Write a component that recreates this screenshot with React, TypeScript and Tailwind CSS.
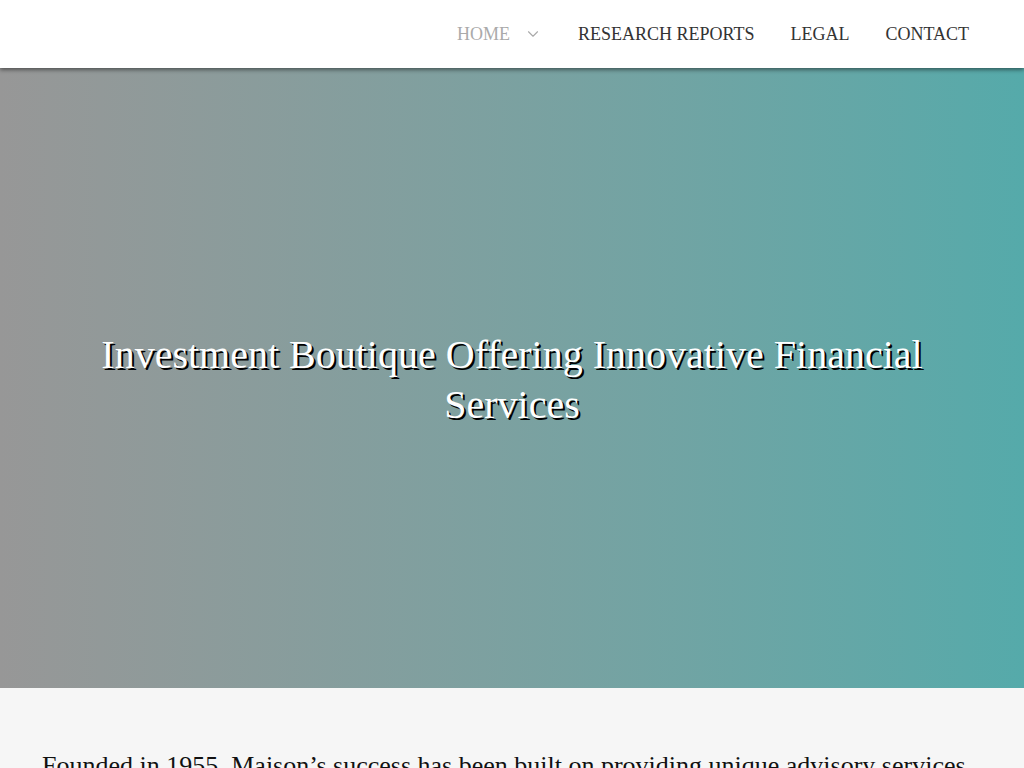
import { ChevronDown } from "lucide-react"

const navItems = ["RESEARCH REPORTS", "LEGAL", "CONTACT"]

export default function App() {
    return (
        <div className="min-h-screen bg-[#f6f6f6] font-['Liberation_Serif',serif]">
            <header className="relative z-10 h-[68px] bg-white shadow-[0_2px_4px_rgba(0,0,0,0.45)] flex items-center justify-end pr-[55px]">
                <nav className="flex items-center gap-[36px] text-[18px]">
                    <a className="flex items-center gap-[14px] text-[#aaaaaa]">
                        HOME
                        <ChevronDown className="w-[18px] h-[18px] text-[#aaaaaa]" strokeWidth={1.5} />
                    </a>
                    {navItems.map(item =>
                        <a key={item} className="text-[#333333]">{item}</a>
                    )}
                </nav>
            </header>
            <section className="h-[620px] bg-gradient-to-r from-[#979797] to-[#55aaaa] flex items-center justify-center px-[90px]">
                <h1 className="text-white text-center text-[40px] leading-[50px] mt-[4px] [text-shadow:2px_2px_0_#000]">
                    Investment Boutique Offering Innovative Financial Services
                </h1>
            </section>
            <section className="px-[42px] pt-[60px]">
                <p className="text-[26px] leading-[36px] text-[#111111]">
                    Founded in 1955, Maison’s success has been built on providing unique advisory services
                </p>
            </section>
        </div>
    )
}
